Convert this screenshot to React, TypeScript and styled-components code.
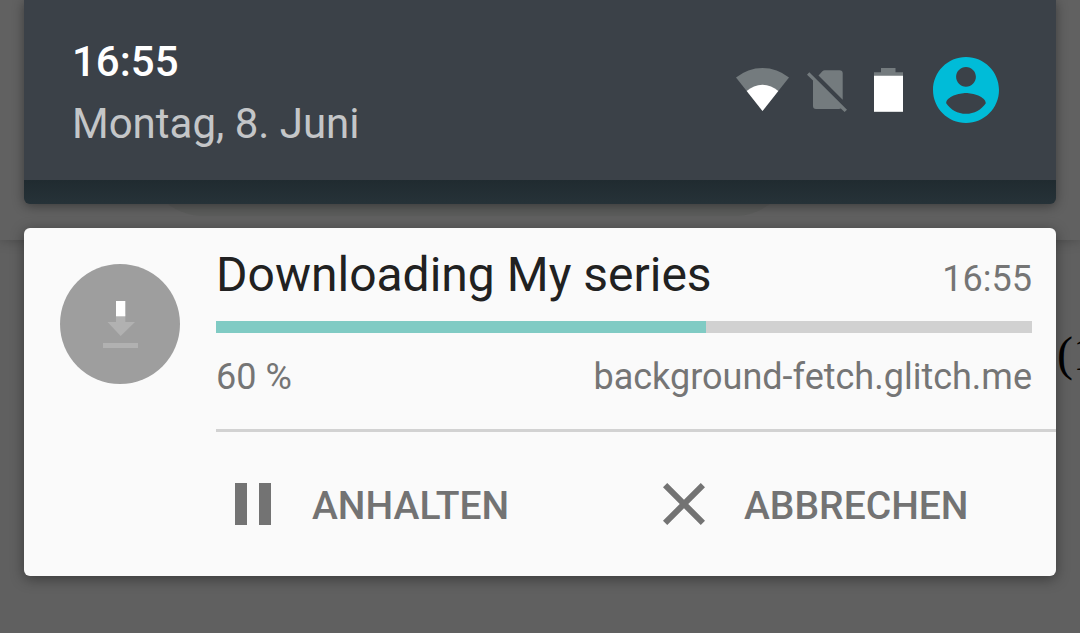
import React from "react";
import styled, { createGlobalStyle } from "styled-components";

const GlobalStyle = createGlobalStyle`
  *, *::before, *::after { box-sizing: border-box; }
  body { margin: 0; background: #606060; font-family: Roboto, "Liberation Sans", sans-serif; }
`;

const Screen = styled.div`
  position: relative;
  min-height: 100vh;
  overflow: hidden;
  background: #606060;
`;

/* The dimmed browser that stays visible behind the notification shade. */
const Backdrop = styled.div`
  position: absolute;
  inset: 0;
  overflow: hidden;
`;

const BrowserBar = styled.div`
  height: 240px;
  padding: 96px 286px 24px 144px;
  background: #616161;
  box-shadow: 0 0 12px rgba(0, 0, 0, 0.25);
`;

const AddressField = styled.div`
  height: 120px;
  border-radius: 60px;
  background: #5c5d5c;
`;

const PageLine = styled.div`
  display: flex;
  justify-content: flex-end;
  padding-top: 86px;
  font: 48px/56px "Liberation Serif", serif;
  color: #000;
`;

const PageText = styled.span`
  width: 23px;
  white-space: nowrap;
`;

const Shade = styled.main`
  position: relative;
  display: flex;
  flex-direction: column;
  gap: 24px;
  padding: 0 24px 57px;
`;

const QuickPanel = styled.header`
  border-radius: 0 0 6px 6px;
  background: linear-gradient(#202b30, #263238) bottom / 100% 24px no-repeat #263238;
  padding-bottom: 24px;
  box-shadow: 0 2px 12px rgba(0, 0, 0, 0.4);
`;

const StatusRow = styled.div`
  display: flex;
  justify-content: space-between;
  align-items: center;
  height: 180px;
  padding: 0 57px 0 48px;
  background: #3b4148;
`;

const Clock = styled.div`
  display: flex;
  flex-direction: column;
  gap: 12px;
  padding-top: 6px;
  font-size: 42px;
  line-height: 50px;
`;

const Time = styled.time`
  font-weight: 500;
  color: #fff;
`;

const DateText = styled.span`
  color: #c4c6c8;
`;

const StatusIcons = styled.div`
  display: flex;
  align-items: center;
  gap: 18px;
`;

const AvatarButton = styled.button`
  display: flex;
  margin: 0 0 0 12px;
  padding: 0;
  border: 0;
  border-radius: 50%;
  background: none;
`;

const Card = styled.article`
  display: flex;
  border-radius: 6px;
  background: #fafafa;
  box-shadow: 0 3px 14px rgba(0, 0, 0, 0.4);
`;

const CardIcon = styled.div`
  flex: none;
  padding: 36px;
  line-height: 0;
`;

const CardBody = styled.div`
  flex: 1;
  min-width: 0;
`;

const Details = styled.div`
  padding: 19px 24px 0 0;
`;

const TextRow = styled.div`
  display: flex;
  justify-content: space-between;
  align-items: baseline;
  font-size: 36px;
  line-height: 56px;
  color: #757575;
`;

const Title = styled.h1`
  margin: 0;
  font-size: 48px;
  font-weight: 400;
  line-height: 56px;
  color: #212121;
`;

const Progress = styled.progress`
  display: block;
  appearance: none;
  width: 100%;
  height: 12px;
  margin: 14px 0 16px;
  border: 0;
  background: #d1d1d1;
  &::-webkit-progress-bar { background: #d1d1d1; }
  &::-webkit-progress-value { background: #80cbc4; }
  &::-moz-progress-bar { background: #80cbc4; }
`;

const Actions = styled.div`
  display: grid;
  grid-template-columns: 18fr 17fr;
  margin-top: 24px;
  border-top: 3px solid #d2d2d2;
`;

const ActionButton = styled.button`
  display: flex;
  align-items: center;
  gap: 24px;
  height: 144px;
  padding: 0;
  border: 0;
  background: none;
  font: 500 39px/48px Roboto, "Liberation Sans", sans-serif;
  color: #737373;
`;

const ActionLabel = styled.span`
  padding-top: 4px;
`;

const WifiIcon = () => (
  <svg width="53" height="66" viewBox="0 0 53 66" aria-hidden="true">
    <path d="M0 20.5A41.7 41.7 0 0 1 53 20.5L26.5 54z" fill="#747b7e" />
    <path d="M10.7 34A23.3 23.3 0 0 1 42.3 34L26.5 54z" fill="#fff" />
  </svg>
);

const NoSimIcon = () => (
  <svg width="48" height="66" viewBox="0 0 48 66" fill="#747b7e" aria-hidden="true">
    <path d="M11.5 18.5L15.4 14.3Q16.4 13.3 17.8 13.3H32.5Q35.7 13.3 35.7 16.5V42.7z" />
    <path d="M0 17.7L2.3 15.3L40 52.7L37.6 55L33.8 51.6Q33 52 32 52H9Q6 52 6 49V23.5z" />
  </svg>
);

const BatteryIcon = () => (
  <svg width="30" height="66" viewBox="0 0 30 66" aria-hidden="true">
    <path d="M8 11H22.5V15.3H30V54.7H1V15.3H8z" fill="#747b7e" />
    <path d="M1 18.7H30V54.7H1z" fill="#fff" />
  </svg>
);

const AccountIcon = () => (
  <svg width="66" height="66" viewBox="2 2 20 20" aria-hidden="true">
    <path
      fill="#00bcd8"
      d="M12 2C6.48 2 2 6.48 2 12s4.48 10 10 10 10-4.48 10-10S17.52 2 12 2zm0 3c1.66 0 3 1.34 3 3s-1.34 3-3 3-3-1.34-3-3 1.34-3 3-3zm0 14.2c-2.5 0-4.71-1.28-6-3.22.03-1.99 4-3.08 6-3.08 1.99 0 5.97 1.09 6 3.08-1.29 1.94-3.5 3.22-6 3.22z"
    />
  </svg>
);

const DownloadIcon = () => (
  <svg width="120" height="120" viewBox="0 0 120 120" aria-hidden="true">
    <circle cx="60" cy="60" r="60" fill="#9e9e9e" />
    <path d="M56 50H65.3V58H75L60.7 72L47.5 58H56zM43 79H78V84H43z" fill="#b1b1b1" />
    <path d="M56 37H65.3V52.3H56z" fill="#fff" />
  </svg>
);

const PauseIcon = () => (
  <svg width="72" height="72" viewBox="0 0 72 72" fill="currentColor" aria-hidden="true">
    <path d="M19 15H31V57H19zM43 15H55V57H43z" />
  </svg>
);

const CancelIcon = () => (
  <svg width="72" height="72" viewBox="0 0 24 24" fill="currentColor" aria-hidden="true">
    <path d="M19 6.41L17.59 5 12 10.59 6.41 5 5 6.41 10.59 12 5 17.59 6.41 19 12 13.41 17.59 19 19 17.59 13.41 12z" />
  </svg>
);

export default function App() {
  return (
    <Screen>
      <GlobalStyle />
      <Backdrop aria-hidden="true">
        <BrowserBar>
          <AddressField />
        </BrowserBar>
        <PageLine>
          <PageText>(1</PageText>
        </PageLine>
      </Backdrop>
      <Shade>
        <QuickPanel>
          <StatusRow>
            <Clock>
              <Time>16:55</Time>
              <DateText>Montag, 8. Juni</DateText>
            </Clock>
            <StatusIcons>
              <WifiIcon />
              <NoSimIcon />
              <BatteryIcon />
              <AvatarButton type="button" aria-label="Konto">
                <AccountIcon />
              </AvatarButton>
            </StatusIcons>
          </StatusRow>
        </QuickPanel>
        <Card>
          <CardIcon>
            <DownloadIcon />
          </CardIcon>
          <CardBody>
            <Details>
              <TextRow>
                <Title>Downloading My series</Title>
                <time>16:55</time>
              </TextRow>
              <Progress value={60} max={100} aria-label="Downloading My series" />
              <TextRow>
                <span>60 %</span>
                <span>background-fetch.glitch.me</span>
              </TextRow>
            </Details>
            <Actions>
              <ActionButton type="button">
                <PauseIcon />
                <ActionLabel>ANHALTEN</ActionLabel>
              </ActionButton>
              <ActionButton type="button">
                <CancelIcon />
                <ActionLabel>ABBRECHEN</ActionLabel>
              </ActionButton>
            </Actions>
          </CardBody>
        </Card>
      </Shade>
    </Screen>
  );
}
